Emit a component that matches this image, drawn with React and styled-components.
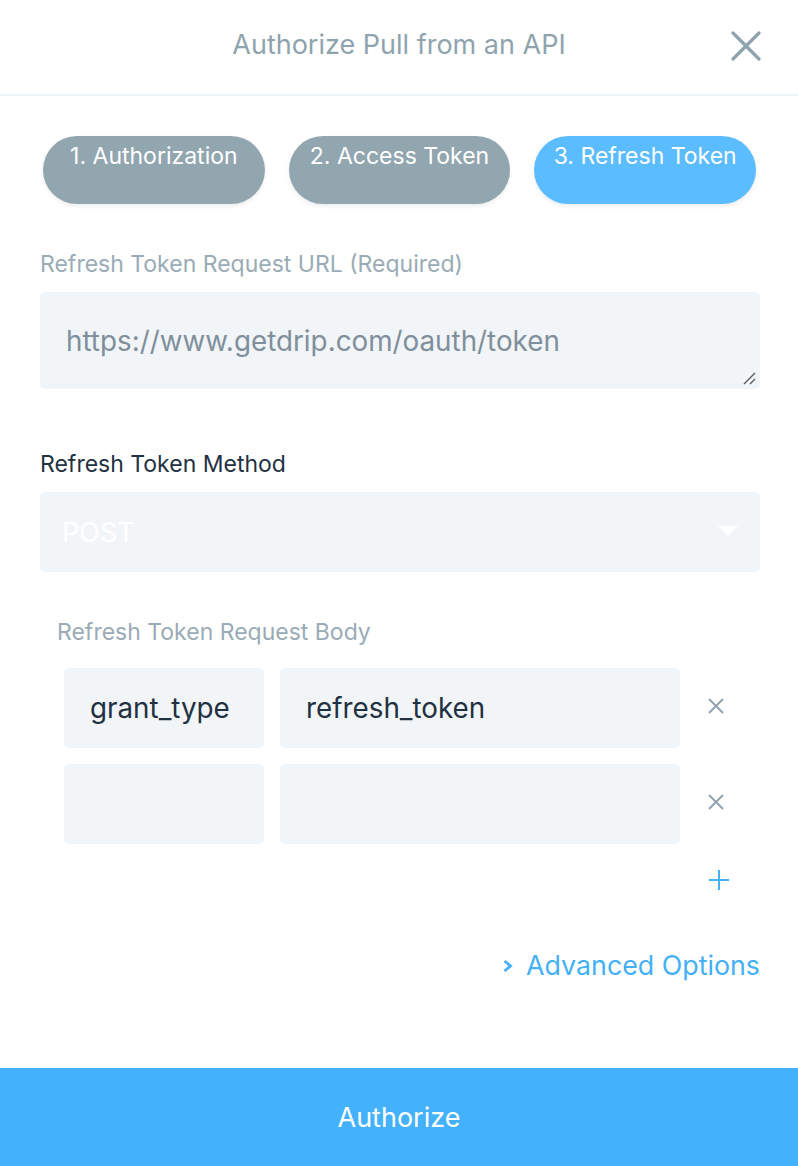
import React from 'react';
import styled, { createGlobalStyle } from 'styled-components';

const GlobalStyle = createGlobalStyle`
  html, body {
    margin: 0;
    padding: 0;
    background: #fff;
  }
  body {
    font-family: Inter, "Noto Sans", sans-serif;
  }
  * { box-sizing: border-box; }
`;

const CrossIcon = ({ size = 16, color = '#8fa3ae', width = 2 }) => (
  <svg width={size} height={size} viewBox="0 0 16 16">
    <path d="M1 1 L15 15 M15 1 L1 15" stroke={color} strokeWidth={width} />
  </svg>
);

const App = () => {
  return (
    <Modal>
      <GlobalStyle />
      <Header>
        <Title>Authorize Pull from an API</Title>
        <CloseButton aria-label="Close">
          <svg width="30" height="30" viewBox="0 0 30 30">
            <path d="M2 2 L28 28 M28 2 L2 28" stroke="#8fa3ae" strokeWidth="3.2" strokeLinecap="round" />
          </svg>
        </CloseButton>
      </Header>

      <Body>
        <Tabs>
          <Tab>1. Authorization</Tab>
          <Tab>2. Access Token</Tab>
          <Tab $active>3. Refresh Token</Tab>
        </Tabs>

        <Label>Refresh Token Request URL (Required)</Label>
        <TextArea>
          https://www.getdrip.com/oauth/token
          <Grip viewBox="0 0 14 14">
            <path d="M2 13 L13 2 M8 13 L13 8" stroke="#555" strokeWidth="1.3" />
          </Grip>
        </TextArea>

        <Label $dark $top={61}>Refresh Token Method</Label>
        <Select>
          <span>POST</span>
          <Caret />
        </Select>

        <SubLabel>Refresh Token Request Body</SubLabel>
        <Rows>
          <Row>
            <KeyBox>grant_type</KeyBox>
            <ValueBox>refresh_token</ValueBox>
            <Remove><CrossIcon /></Remove>
          </Row>
          <Row>
            <KeyBox />
            <ValueBox />
            <Remove><CrossIcon /></Remove>
          </Row>
          <AddRow>
            <svg width="22" height="22" viewBox="0 0 22 22">
              <path d="M11 1 V21 M1 11 H21" stroke="#44b0f7" strokeWidth="2" />
            </svg>
          </AddRow>
        </Rows>

        <Advanced>
          <svg width="12" height="16" viewBox="0 0 12 16">
            <path d="M2.5 3 L8.5 8 L2.5 13" fill="none" stroke="#44b0f7" strokeWidth="2.8" />
          </svg>
          Advanced Options
        </Advanced>
      </Body>

      <Footer>Authorize</Footer>
    </Modal>
  );
};

export default App;

const Modal = styled.div`
  width: 798px;
  height: 1166px;
  display: flex;
  flex-direction: column;
  background: #fff;
`;

const Header = styled.div`
  height: 96px;
  position: relative;
  display: flex;
  align-items: center;
  justify-content: center;
  border-bottom: 2px solid #eef3f7;
`;

const Title = styled.h1`
  margin: 0;
  margin-top: -6px;
  font-size: 27px;
  font-weight: 400;
  color: #8fa3ae;
`;

const CloseButton = styled.div`
  position: absolute;
  right: 37px;
  top: 31px;
  width: 30px;
  height: 30px;
  svg { display: block; }
`;

const Body = styled.div`
  flex: 1;
  padding: 40px 38px 0 40px;
  display: flex;
  flex-direction: column;
`;

const Tabs = styled.div`
  display: flex;
  gap: 24px;
  padding: 0 4px 0 3px;
`;

const Tab = styled.div`
  flex: 1;
  height: 68px;
  border-radius: 34px;
  background: ${p => (p.$active ? '#5bbcff' : '#92a6b0')};
  color: #fff;
  font-size: 23px;
  line-height: 28px;
  text-align: center;
  padding-top: 6px;
  white-space: nowrap;
  box-shadow: 0 2px 4px rgba(0, 0, 0, 0.08);
`;

const Label = styled.div`
  margin-top: ${p => p.$top || 46}px;
  font-size: 23px;
  color: ${p => (p.$dark ? '#1f3142' : '#9aabb6')};
  line-height: 28px;
`;

const TextArea = styled.div`
  position: relative;
  margin-top: 14px;
  height: 97px;
  background: #f1f5f8;
  border-radius: 5px;
  padding: 32px 26px 0;
  font-size: 27.8px;
  color: #7f8f9b;
  line-height: 34px;
`;

const Grip = styled.svg`
  position: absolute;
  right: 4px;
  bottom: 4px;
  width: 14px;
  height: 14px;
`;

const Select = styled.div`
  margin-top: 14px;
  height: 80px;
  background: #f1f5f8;
  border-radius: 5px;
  display: flex;
  align-items: center;
  justify-content: space-between;
  padding: 0 22px;
  font-size: 27px;
  color: #fff;
`;

const Caret = styled.div`
  width: 0;
  height: 0;
  border-left: 10px solid transparent;
  border-right: 10px solid transparent;
  border-top: 10px solid #fff;
  margin-top: -2px;
`;

const SubLabel = styled.div`
  margin-top: 46px;
  margin-left: 17px;
  font-size: 23px;
  color: #9aabb6;
  line-height: 28px;
`;

const Rows = styled.div`
  margin-top: 22px;
  padding-left: 24px;
  display: flex;
  flex-direction: column;
  gap: 16px;
`;

const Row = styled.div`
  display: flex;
  align-items: center;
  gap: 16px;
`;

const Field = styled.div`
  height: 80px;
  background: #f1f5f8;
  border-radius: 5px;
  display: flex;
  align-items: center;
  font-size: 27.8px;
  color: #1f3142;
  padding-left: 26px;
`;

const KeyBox = styled(Field)`
  width: 200px;
`;

const ValueBox = styled(Field)`
  width: 400px;
`;

const Remove = styled.div`
  margin-left: 12px;
  margin-top: -4px;
  svg { display: block; }
`;

const AddRow = styled.div`
  display: flex;
  justify-content: flex-end;
  padding-right: 30px;
  margin-top: 9px;
  svg { display: block; }
`;

const Advanced = styled.div`
  margin-top: 58px;
  align-self: flex-end;
  display: flex;
  align-items: center;
  gap: 12px;
  font-size: 26.8px;
  line-height: 33px;
  color: #44b0f7;
`;

const Footer = styled.div`
  height: 98px;
  background: #43b1fb;
  color: #fff;
  font-size: 27px;
  display: flex;
  align-items: center;
  justify-content: center;
`;
